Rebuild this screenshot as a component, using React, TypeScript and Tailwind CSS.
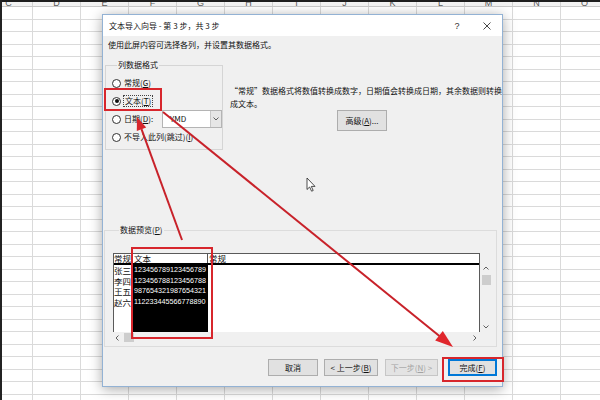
import React from 'react';

const cols = ['C', 'D', 'E', 'F', 'G', 'H', 'I', 'J', 'K', 'L', 'M', 'N', 'O'];
const rows = Array.from({ length: 32 }, (_, i) => i);
const data = [
  ['张三', '123456789123456789'],
  ['李四', '123456788123456788'],
  ['王五', '987654321987654321'],
  ['赵六', '112233445566778890'],
];

function Sheet() {
  return (
    <div className="flex h-full">
      <div className="w-[2px] shrink-0 bg-[#232323]" />
      <div className="flex-1 overflow-hidden flex flex-col">
        <div className="h-[2px] shrink-0 bg-[#1e1e1e]" />
        <div className="flex -ml-[17px] h-[5px] shrink-0 bg-[#f3f3f3] border-b border-[#c9c9c9] overflow-hidden">
          {cols.map((c) => (
            <div key={c} className="w-[48px] shrink-0 border-r border-[#d2d2d2] flex justify-center items-end">
              <span className="text-[9px] leading-[6px] text-[#5a5a5a] font-['Liberation_Sans',sans-serif]">{c}</span>
            </div>
          ))}
        </div>
        {rows.map((r) => (
          <div key={r} className="flex -ml-[17px] h-[12.5px] shrink-0 border-b border-[#dadada]">
            {cols.map((c) => (
              <div key={c} className="w-[48px] shrink-0 border-r border-[#dadada]" />
            ))}
          </div>
        ))}
      </div>
    </div>
  );
}

function Radio({ checked }: { checked?: boolean }) {
  return (
    <span className="w-[9px] h-[9px] shrink-0 rounded-full border border-[#333] bg-white flex items-center justify-center">
      {checked && <span className="w-[4px] h-[4px] rounded-full bg-[#111]" />}
    </span>
  );
}

function Chevron({ dir }: { dir: 'up' | 'down' | 'left' | 'right' }) {
  const pts: Record<string, string> = {
    up: '0.5,3.5 3,1 5.5,3.5',
    down: '0.5,1.5 3,4 5.5,1.5',
    left: '3.5,0.5 1,3 3.5,5.5',
    right: '1.5,0.5 4,3 1.5,5.5',
  };
  return (
    <svg width="6" height="6" viewBox="0 0 6 6" className="block">
      <polyline points={pts[dir]} fill="none" stroke="#606060" strokeWidth="1" />
    </svg>
  );
}

function Btn({ w, children, cls = '' }: { w: string; children: React.ReactNode; cls?: string }) {
  return (
    <div className={`${w} h-[17px] shrink-0 flex items-center justify-center leading-[10px] whitespace-nowrap ${cls}`}>{children}</div>
  );
}

function Dialog() {
  return (
    <div className="absolute left-[102px] top-[14px] w-[401px] h-[373px] border border-[#93b2d4] bg-[#f0f0f0] shadow-[0_2px_12px_rgba(0,0,0,0.35)] flex flex-col text-[8px] text-[#111]">
      {/* title bar */}
      <div className="h-[21px] shrink-0 bg-white flex items-center pl-[6px]">
        <span className="leading-[10px] whitespace-pre">文本导入向导 - 第 3 步，共 3 步</span>
        <div className="ml-auto flex items-center pr-[5px]">
          <span className="w-[20px] text-center text-[9px] leading-[10px] text-[#333] font-['Liberation_Sans',sans-serif]">?</span>
          <span className="w-[20px] ml-[10px] flex justify-center">
            <svg width="8" height="8" viewBox="0 0 8 8">
              <path d="M0.5 0.5 L7.5 7.5 M7.5 0.5 L0.5 7.5" stroke="#333" strokeWidth="0.9" />
            </svg>
          </span>
        </div>
      </div>

      {/* body */}
      <div className="flex-1 flex flex-col">
        <div className="mt-[4px] pl-[5px] h-[10px] leading-[10px]">使用此屏内容可选择各列，并设置其数据格式。</div>

        <div className="flex mt-[10px] h-[90px]">
          <fieldset className="ml-[2px] w-[122px] h-[90px] border border-[#d5d5d5] pl-[6px] pt-[4px]">
            <legend className="ml-[5px] px-[1px] leading-[10px]">列数据格式</legend>
            <div className="h-[18px] flex items-center">
              <Radio />
              <span className="ml-[3px] leading-[10px]">常规(<u>G</u>)</span>
            </div>
            <div className="h-[18px] flex items-center">
              <Radio checked />
              <span className="ml-[2px] px-[1px] leading-[10px] border border-dotted border-[#444]">文本(<u>T</u>)</span>
            </div>
            <div className="h-[18px] flex items-center">
              <Radio />
              <span className="ml-[3px] w-[38px] shrink-0 leading-[10px]">日期(<u>D</u>):</span>
              <div className="w-[60px] h-[18px] shrink-0 bg-white border border-[#b4b4b4] flex items-center">
                <span className="ml-[7px] leading-[10px]">YMD</span>
                <div className="ml-auto w-[11px] h-full bg-[#e6e6e6] border-l border-[#c8c8c8] flex items-center justify-center">
                  <Chevron dir="down" />
                </div>
              </div>
            </div>
            <div className="h-[18px] flex items-center">
              <Radio />
              <span className="ml-[3px] leading-[10px] whitespace-nowrap">不导入此列(跳过)(<u>I</u>)</span>
            </div>
          </fieldset>

          <div className="ml-[7px] flex flex-col">
            <div className="mt-[24px] leading-[13px] whitespace-nowrap">
              “常规”数据格式将数值转换成数字，日期值会转换成日期，其余数据则转换
              <br />
              成文本。
            </div>
            <div className="ml-[107px] w-[50px] h-[21px] bg-[#e1e1e1] border border-[#adadad] flex items-center justify-center leading-[10px]">
              高级(<u>A</u>)...
            </div>
          </div>
        </div>

        <fieldset className="mt-[75px] ml-[1px] w-[393px] h-[122px] border border-[#dcdcdc] pl-[8px] pt-[18px]">
          <legend className="ml-[6px] px-[1px] leading-[10px]">数据预览(<u>P</u>)</legend>
          <div className="flex flex-col w-[379px]">
            <div className="flex h-[79px]">
              <div className="w-[367px] border-l border-t border-r border-[#5a5a5a] bg-white flex flex-col">
                <div className="h-[11px] shrink-0 flex border-b-2 border-black text-[8.5px] leading-[9px] whitespace-nowrap">
                  <div className="w-[19px] shrink-0 border-r border-[#555]">常规</div>
                  <div className="w-[75px] shrink-0 border-r border-[#555] pl-[1px]">文本</div>
                  <div className="flex-1 pl-[1px]">常规</div>
                </div>
                <div className="flex-1 flex">
                  <div className="w-[19px] shrink-0 flex flex-col text-[8.5px] leading-[10.7px]">
                    {data.map(([n]) => (
                      <div key={n} className="whitespace-nowrap">{n}</div>
                    ))}
                  </div>
                  <div className="w-[75px] shrink-0 bg-black text-white flex flex-col pl-[1px] text-[7.2px] leading-[10.7px] font-['Liberation_Sans',sans-serif]">
                    {data.map(([n, v]) => (
                      <div key={n}>{v}</div>
                    ))}
                  </div>
                  <div className="flex-1" />
                </div>
              </div>
              <div className="w-[12px] flex flex-col">
                <div className="h-[11px] shrink-0" />
                <div className="h-[10px] flex items-center justify-center">
                  <Chevron dir="up" />
                </div>
                <div className="mt-[1px] mx-auto w-[9px] h-[10px] bg-[#cdcdcd]" />
                <div className="flex-1" />
                <div className="h-[10px] flex items-center justify-center">
                  <Chevron dir="down" />
                </div>
              </div>
            </div>
            <div className="w-[367px] h-[11px] flex items-center">
              <div className="w-[10px] flex justify-center">
                <Chevron dir="left" />
              </div>
              <div className="ml-[1px] w-[10px] h-[9px] bg-[#cdcdcd]" />
              <div className="flex-1" />
              <div className="w-[10px] flex justify-center">
                <Chevron dir="right" />
              </div>
            </div>
          </div>
        </fieldset>

        <div className="mt-[12px] flex pl-[165px]">
          <Btn w="w-[50px]" cls="bg-[#e1e1e1] border border-[#adadad]">取消</Btn>
          <Btn w="w-[54px] ml-[6px]" cls="bg-[#e1e1e1] border border-[#adadad]">
            &lt; 上一步(<u>B</u>)
          </Btn>
          <Btn w="w-[53px] ml-[7px]" cls="bg-[#e3e3e3] border border-[#c6c6c6] text-[#a3a3a3]">
            下一步(<u>N</u>) &gt;
          </Btn>
          <Btn w="w-[49px] ml-[10px]" cls="bg-[#e1e1e1] border border-[#0078d7] shadow-[inset_0_0_0_1px_#0078d7]">
            完成(<u>F</u>)
          </Btn>
        </div>
      </div>
    </div>
  );
}

function Overlay() {
  const red = '#d7262c';
  return (
    <svg className="absolute left-0 top-0 pointer-events-none" width="600" height="400" viewBox="0 0 600 400">
      <rect x="105" y="89" width="56" height="21" fill="none" stroke={red} strokeWidth="2" />
      <rect x="132" y="248" width="80" height="90" fill="none" stroke={red} strokeWidth="2" />
      <rect x="443" y="358" width="60" height="23" fill="none" stroke={red} strokeWidth="2" />
      <line x1="182" y1="240" x2="141.5" y2="129.2" stroke="#c8222a" strokeWidth="2" />
      <polygon points="137,117 146.2,127.5 136.8,130.9" fill="#d7262c" />
      <line x1="163" y1="112" x2="440" y2="336.5" stroke="#c8222a" strokeWidth="2" />
      <polygon points="453,347 435.2,340.4 442.8,331" fill="#e0262c" />
      <polygon
        points="307,178 307,189.5 309.6,187 311.6,191.2 313.2,190.5 311.3,186.4 315,186.4"
        fill="#fff"
        stroke="#222"
        strokeWidth="0.8"
        strokeLinejoin="round"
      />
    </svg>
  );
}

export default function App() {
  return (
    <div className="relative w-[600px] h-[400px] overflow-hidden bg-white font-['Noto_Sans_CJK_SC',sans-serif]">
      <Sheet />
      <Dialog />
      <Overlay />
    </div>
  );
}
